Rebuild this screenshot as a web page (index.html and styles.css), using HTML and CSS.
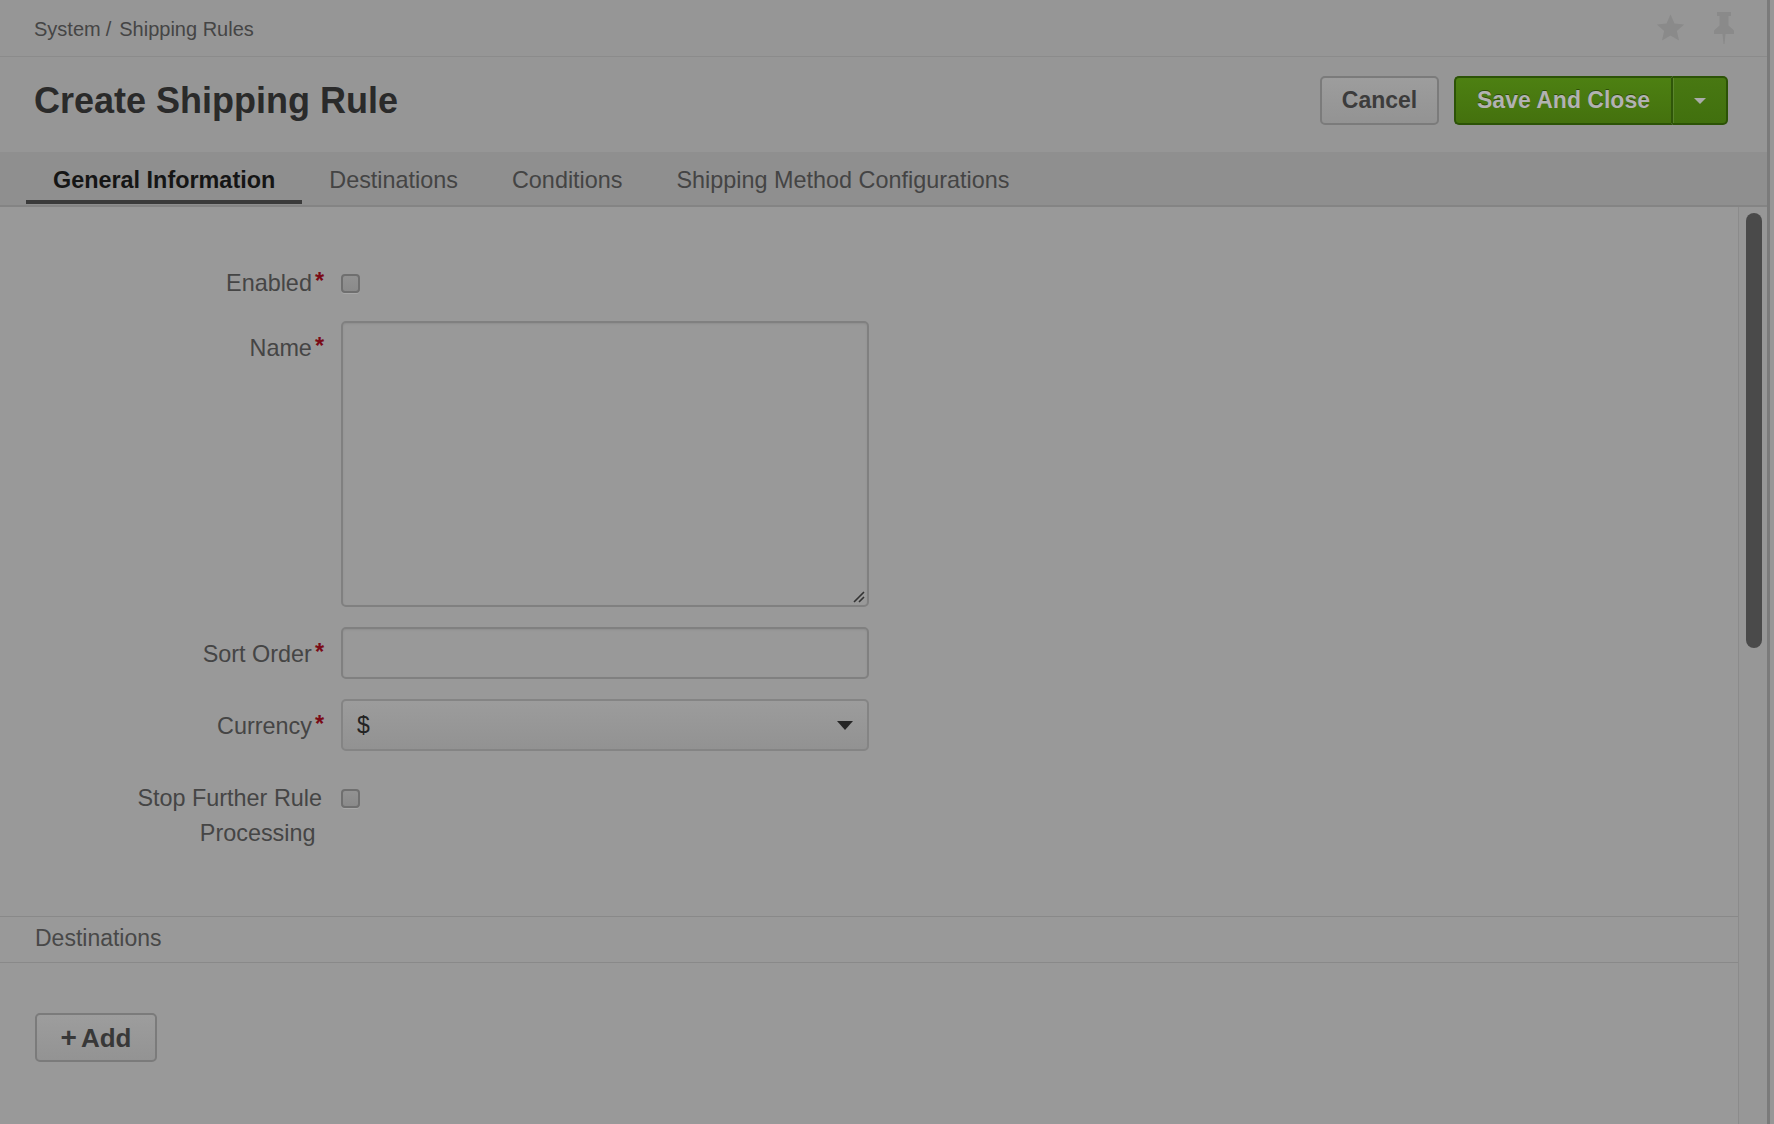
FILE: index.html
```html
<!DOCTYPE html>
<html lang="en">
<head>
<meta charset="utf-8">
<title>Create Shipping Rule</title>
<link rel="stylesheet" href="styles.css">
</head>
<body>
<div class="window">
  <div class="topbar">
    <nav class="breadcrumb"><span>System</span><span class="sep">/</span><span>Shipping Rules</span></nav>
    <div class="top-icons">
      <svg class="icon-star" viewBox="0 0 24 24" width="31" height="30"><path d="M12 1.2l3.2 7.1 7.7.8-5.8 5.2 1.7 7.6L12 18l-6.8 3.9 1.7-7.6L1.1 9.1l7.7-.8z"/></svg>
      <svg class="icon-pin" viewBox="0 0 22 32" width="22" height="32"><path d="M4 0h14v4h-2.5v9.5l5.5 5v3.5h-8.5L11.5 32h-1L9.5 22H1v-3.5l5.5-5V4H4z"/></svg>
    </div>
  </div>

  <div class="header">
    <h1 class="title">Create Shipping Rule</h1>
    <div class="actions">
      <button class="btn btn-cancel" type="button">Cancel</button>
      <div class="btn-group">
        <button class="btn btn-success btn-save" type="button">Save And Close</button>
        <button class="btn btn-success btn-caret" type="button"><span class="caret"></span></button>
      </div>
    </div>
  </div>

  <div class="tabs">
    <div class="tab active">General Information</div>
    <div class="tab">Destinations</div>
    <div class="tab">Conditions</div>
    <div class="tab">Shipping Method Configurations</div>
  </div>

  <div class="main">
    <div class="content">
      <form class="form">
        <div class="row">
          <label class="label">Enabled<span class="req">*</span></label>
          <input class="checkbox" type="checkbox">
        </div>
        <div class="row">
          <label class="label">Name<span class="req">*</span></label>
          <div class="textarea-wrap">
            <textarea class="textarea"></textarea>
            <svg class="resize-handle" viewBox="0 0 12 12" width="12" height="12"><path d="M1 11L11 1M6 11l5-5" /></svg>
          </div>
        </div>
        <div class="row">
          <label class="label">Sort Order<span class="req">*</span></label>
          <input class="input" type="text">
        </div>
        <div class="row">
          <label class="label">Currency<span class="req">*</span></label>
          <div class="select"><span class="select-value">$</span><span class="select-arrow"></span></div>
        </div>
        <div class="row row-last">
          <label class="label">Stop Further Rule Processing&nbsp;</label>
          <input class="checkbox" type="checkbox">
        </div>
      </form>

      <div class="section-title">Destinations</div>
      <div class="section-body">
        <button class="btn btn-add" type="button"><span class="plus">+</span>Add</button>
      </div>
    </div>
    <div class="scrollbar"><div class="thumb"></div></div>
  </div>
</div>
</body>
</html>
```

FILE: styles.css
```css
html, body {
  margin: 0;
  padding: 0;
}

body {
  background: #979797;
  font-family: "Liberation Sans", Arial, Helvetica, sans-serif;
  overflow: hidden;
}

.window {
  width: 1770px;
  height: 1124px;
  box-sizing: border-box;
  border-right: 3px solid #7b7b7b;
  background: #999999;
  display: flex;
  flex-direction: column;
}

/* top bar */
.topbar {
  height: 57px;
  box-sizing: border-box;
  border-bottom: 1px solid #8b8b8b;
  background: #969696;
  display: flex;
  align-items: center;
  justify-content: space-between;
  padding: 2px 32px 0 34px;
  flex-shrink: 0;
}

.breadcrumb {
  font-size: 20px;
  color: #454545;
}

.breadcrumb .sep {
  margin: 0 8px 0 5px;
}

.top-icons {
  display: flex;
  align-items: center;
  gap: 27px;
  margin-top: -2px;
}

.icon-star, .icon-pin {
  fill: #8a8a8a;
  display: block;
}

/* header */
.header {
  height: 95px;
  box-sizing: border-box;
  padding: 0 39px 8px 34px;
  background: #969696;
  display: flex;
  align-items: center;
  justify-content: space-between;
  flex-shrink: 0;
}

.title {
  margin: 0;
  font-size: 36px;
  font-weight: bold;
  color: #2a2a2a;
}

.actions {
  display: flex;
  align-items: center;
  gap: 15px;
}

.btn {
  height: 49px;
  box-sizing: border-box;
  border: 2px solid #7b7b7b;
  border-radius: 5px;
  background: linear-gradient(#9d9d9d, #939393);
  font-family: "Liberation Sans", Arial, sans-serif;
  font-size: 23px;
  font-weight: bold;
  color: #3c3c3c;
  padding: 0 20px;
  margin: 0;
  cursor: pointer;
}

.btn-cancel {
  width: 119px;
  padding: 0;
}

.btn-group {
  display: flex;
}

.btn-success {
  background: linear-gradient(#4d8012, #44710e);
  border-color: #2c5306;
  color: #b2b2b2;
  text-shadow: 0 -1px 0 rgba(0, 0, 0, 0.4);
}

.btn-save {
  width: 219px;
  padding: 0;
  border-radius: 5px 0 0 5px;
  border-right: 2px solid #2f5609;
}

.btn-caret {
  width: 55px;
  padding: 0;
  border-left: 0;
  border-radius: 0 5px 5px 0;
  background: linear-gradient(#487812, #41700e);
  box-shadow: inset 1px 0 0 rgba(255, 255, 255, 0.12);
  display: flex;
  align-items: center;
  justify-content: center;
}

.caret {
  width: 0;
  height: 0;
  border-left: 6px solid transparent;
  border-right: 6px solid transparent;
  border-top: 6px solid #ababab;
}

/* tabs */
.tabs {
  height: 55px;
  box-sizing: border-box;
  padding: 0 0 1px 26px;
  background: #8f8f8f;
  border-bottom: 2px solid #848484;
  display: flex;
  flex-shrink: 0;
}

.tab {
  height: 52px;
  box-sizing: border-box;
  padding: 8px 27px 0;
  border-bottom: 4px solid transparent;
  font-size: 23.4px;
  line-height: 40px;
  color: #444444;
  white-space: nowrap;
}

.tab.active {
  font-weight: bold;
  color: #151515;
  border-bottom-color: #3b3b3b;
}

/* main */
.main {
  flex: 1;
  display: flex;
  min-height: 0;
}

.content {
  flex: 1;
  min-width: 0;
}

.scrollbar {
  width: 29px;
  box-sizing: border-box;
  border-left: 1px solid #8b8b8b;
  background: #979797;
  padding: 6px 0 0 7px;
}

.thumb {
  width: 16px;
  height: 435px;
  border-radius: 8px;
  background: #4a4a4a;
}

/* form */
.form {
  padding: 49px 0 65px 124px;
  margin: 0;
}

.row {
  display: flex;
  align-items: flex-start;
  margin-bottom: 20px;
}

.row-last {
  margin-bottom: 0;
}

.label {
  width: 198px;
  margin-right: 19px;
  padding-top: 10px;
  text-align: right;
  font-size: 23.4px;
  line-height: 35px;
  color: #454545;
  flex-shrink: 0;
}

.req {
  color: #7a0b16;
  font-weight: bold;
  margin-left: 3px;
  margin-right: -2px;
  position: relative;
  top: -2px;
}

.checkbox {
  appearance: none;
  -webkit-appearance: none;
  width: 19px;
  height: 19px;
  margin: 18px 0 0;
  box-sizing: border-box;
  border: 2px solid #6f6f6f;
  border-radius: 4px;
  background: linear-gradient(#929292, #8a8a8a);
  box-shadow: 0 1px 0 rgba(255, 255, 255, 0.15);
}

.textarea-wrap {
  position: relative;
  width: 528px;
  height: 286px;
}

.textarea {
  display: block;
  width: 528px;
  height: 286px;
  box-sizing: border-box;
  margin: 0;
  resize: none;
  border: 2px solid #808080;
  border-radius: 5px;
  background: #999999;
  box-shadow: inset 0 1px 2px rgba(0, 0, 0, 0.08);
  font-family: "Liberation Sans", Arial, sans-serif;
  font-size: 23px;
}

.resize-handle {
  position: absolute;
  right: 4px;
  bottom: 4px;
  stroke: #333333;
  stroke-width: 1.6;
  fill: none;
}

.input {
  width: 528px;
  height: 52px;
  box-sizing: border-box;
  margin: 0;
  border: 2px solid #808080;
  border-radius: 5px;
  background: #999999;
  box-shadow: inset 0 1px 2px rgba(0, 0, 0, 0.08);
  font-family: "Liberation Sans", Arial, sans-serif;
  font-size: 23px;
}

.select {
  width: 528px;
  height: 52px;
  box-sizing: border-box;
  border: 2px solid #848484;
  border-radius: 5px;
  background: linear-gradient(#9c9c9c, #929292);
  display: flex;
  align-items: center;
  justify-content: space-between;
  padding: 0 14px 0 14px;
  font-size: 23px;
  color: #232323;
}

.select-arrow {
  width: 0;
  height: 0;
  border-left: 8.5px solid transparent;
  border-right: 8.5px solid transparent;
  border-top: 9px solid #262626;
}

/* section */
.section-title {
  height: 47px;
  box-sizing: border-box;
  border-top: 1px solid #898989;
  border-bottom: 1px solid #898989;
  padding-left: 35px;
  font-size: 23px;
  line-height: 42px;
  color: #484848;
}

.section-body {
  padding: 50px 0 0 35px;
}

.btn-add {
  width: 122px;
  padding: 0;
  font-size: 26px;
  color: #383838;
}

.plus {
  font-size: 28px;
  margin-right: 4px;
}
```
